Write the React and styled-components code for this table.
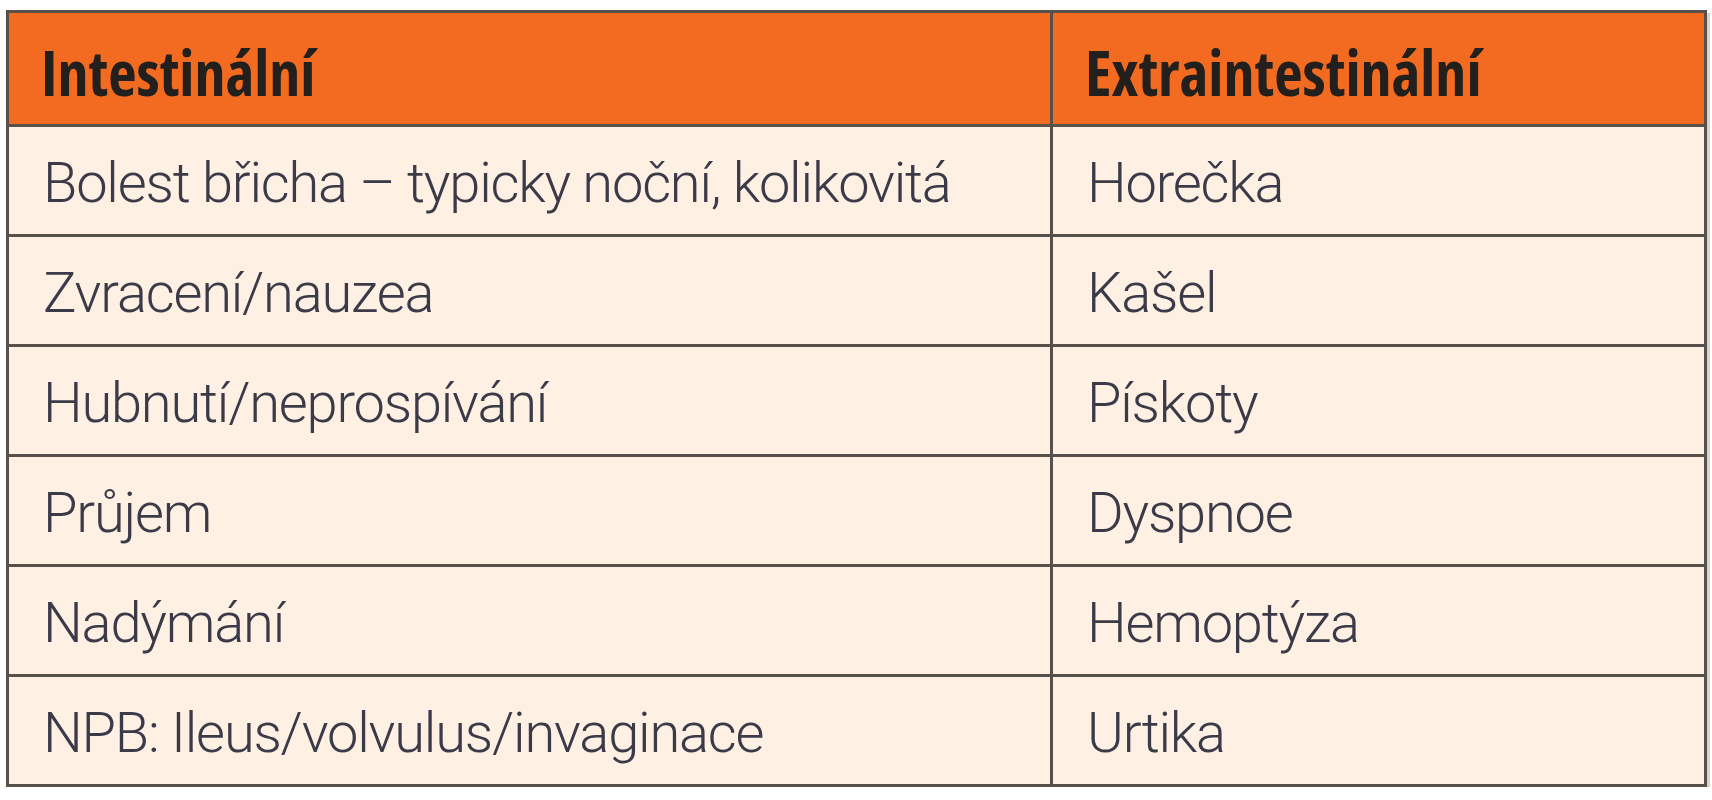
import React from "react";
import styled, { createGlobalStyle } from "styled-components";

const Global = createGlobalStyle`
  html, body { margin: 0; padding: 0; background: #ffffff; }
  body { font-family: "Roboto", "Liberation Sans", sans-serif; }
`;

const Page = styled.div`
  padding: 10px 8px 0 6px;
`;

const Table = styled.table`
  width: 1698px;
  border-collapse: collapse;
  table-layout: fixed;
  border: 3px solid #58504a;
  box-shadow: 3px 3px 0 #d8d4d0;
`;

const Col = styled.col`
  width: ${(p) => p.$w}px;
`;

const HeadRow = styled.tr`
  height: 114px;
`;

const BodyRow = styled.tr`
  height: 110px;
`;

const HeadCell = styled.th`
  background: #f26b21;
  color: #231f1c;
  text-align: left;
  padding: 6px 0 0 32px;
  font-family: "Open Sans", "DejaVu Sans Condensed", sans-serif;
  font-stretch: 75%;
  font-weight: 700;
  font-size: 62px;
  border: 3px solid #58504a;
  overflow: hidden;
  white-space: nowrap;
`;

const Cell = styled.td`
  background: #fef0e3;
  color: #3b3a48;
  padding: 4px 0 0 34px;
  font-family: "Roboto", "Liberation Sans", sans-serif;
  font-weight: 300;
  font-size: 56px;
  letter-spacing: -1.2px;
  white-space: nowrap;
  overflow: hidden;
  border: 3px solid #58504a;
`;

const rows = [
  ["Bolest břicha – typicky noční, kolikovitá", "Horečka"],
  ["Zvracení/nauzea", "Kašel"],
  ["Hubnutí/neprospívání", "Pískoty"],
  ["Průjem", "Dyspnoe"],
  ["Nadýmání", "Hemoptýza"],
  ["NPB: Ileus/volvulus/invaginace", "Urtika"],
];

export default function App() {
  return (
    <>
      <Global />
      <Page>
        <Table>
          <colgroup>
            <Col $w={1044} />
            <Col $w={654} />
          </colgroup>
          <thead>
            <HeadRow>
              <HeadCell>Intestinální</HeadCell>
              <HeadCell>Extraintestinální</HeadCell>
            </HeadRow>
          </thead>
          <tbody>
            {rows.map(([a, b]) => (
              <BodyRow key={a}>
                <Cell>{a}</Cell>
                <Cell>{b}</Cell>
              </BodyRow>
            ))}
          </tbody>
        </Table>
      </Page>
    </>
  );
}
